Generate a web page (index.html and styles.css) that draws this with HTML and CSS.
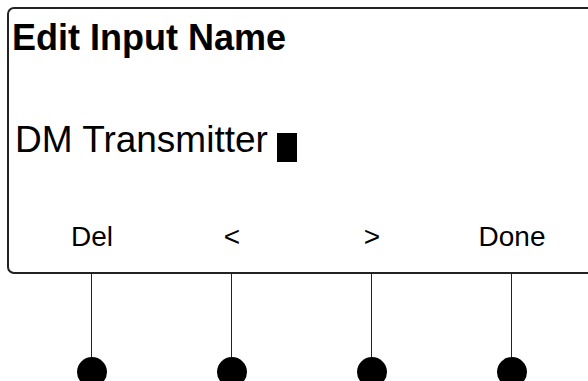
FILE: index.html
```html
<!DOCTYPE html>
<html lang="en">
<head>
  <meta charset="UTF-8" />
  <meta name="viewport" content="width=device-width, initial-scale=1.0" />
  <title>Edit Input Name</title>
  <link rel="stylesheet" href="styles.css">
</head>
<body>
  <!-- LCD SCREEN -->
  <div class="screen">
    <h1 class="title">Edit Input Name</h1>
    <div class="value">DM Transmitter<span class="cursor"></span></div>

    <div class="softkeys">
      <span class="softkey">Del</span>
      <span class="softkey">&lt;</span>
      <span class="softkey">&gt;</span>
      <span class="softkey">Done</span>
    </div>
  </div>

  <!-- HARD BUTTONS -->
  <div class="buttons">
    <div class="button"><span class="stem"></span><span class="knob"></span></div>
    <div class="button"><span class="stem"></span><span class="knob"></span></div>
    <div class="button"><span class="stem"></span><span class="knob"></span></div>
    <div class="button"><span class="stem"></span><span class="knob"></span></div>
  </div>
</body>
</html>
```

FILE: styles.css
```css
html, body {
  margin: 0;
  padding: 0;
  background-color: white;
  overflow: hidden;
}

body {
  font-family: "Liberation Sans", Arial, sans-serif;
  color: #000;
  width: 588px;
  height: 381px;
}

.screen {
  display: flex;
  flex-direction: column;
  margin: 7px 0 0 7px;
  width: 620px;
  height: 267px;
  border: 2px solid #222;
  border-radius: 7px;
  box-sizing: border-box;
  padding: 11px 0 21px 0;
}

.title {
  margin: 0;
  padding-left: 3px;
  font-size: 36px;
  font-weight: bold;
  line-height: 36px;
}

.value {
  margin-top: 65px;
  padding-left: 6px;
  font-size: 37px;
  line-height: 37px;
}

.cursor {
  display: inline-block;
  width: 20px;
  height: 29px;
  margin-left: 9px;
  background-color: #000;
  vertical-align: -10px;
}

.softkeys {
  display: flex;
  margin-top: auto;
  padding-left: 13px;
}

.softkey {
  width: 140px;
  text-align: center;
  font-size: 28px;
  line-height: 28px;
}

.buttons {
  display: flex;
  padding-left: 22px;
}

.button {
  width: 140px;
  display: flex;
  flex-direction: column;
}

.stem {
  width: 1px;
  height: 83px;
  margin-left: 69px;
  background-color: #222;
}

.knob {
  width: 30px;
  height: 30px;
  margin-left: 55px;
  border-radius: 50%;
  background-color: #000;
}
```
